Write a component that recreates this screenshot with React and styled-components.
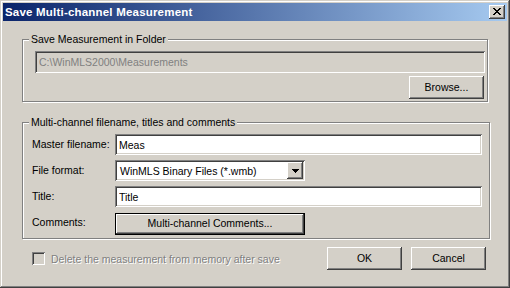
import styled, { createGlobalStyle, css } from "styled-components";

const GlobalStyle = createGlobalStyle`
  html, body {
    margin: 0;
    padding: 0;
    background: #d4d0c8;
  }
  * {
    box-sizing: border-box;
  }
`;

const face = "#d4d0c8";

const raised = css`
  box-shadow: inset -1px -1px 0 #404040, inset 1px 1px 0 #ffffff,
    inset -2px -2px 0 #808080;
`;

const sunken = css`
  box-shadow: inset 1px 1px 0 #808080, inset -1px -1px 0 #ffffff,
    inset 2px 2px 0 #404040, inset -2px -2px 0 ${face};
`;

const Window = styled.div`
  width: 510px;
  height: 288px;
  padding: 3px;
  background: ${face};
  box-shadow: inset -1px -1px 0 #404040, inset 1px 1px 0 ${face},
    inset -2px -2px 0 #808080, inset 2px 2px 0 #ffffff;
  font-family: "Liberation Sans", Arial, sans-serif;
  font-size: 10.5px;
  color: #000;
`;

const TitleBar = styled.div`
  height: 18px;
  display: flex;
  align-items: center;
  justify-content: space-between;
  padding: 0 2px 0 2px;
  background: linear-gradient(to right, #0a246a, #a6caf0);
`;

const Title = styled.span`
  color: #fff;
  font-weight: bold;
  font-size: 11.5px;
  letter-spacing: 0.2px;
  line-height: 18px;
`;

const CloseButton = styled.div`
  width: 16px;
  height: 14px;
  background: ${face};
  ${raised};
  display: flex;
  align-items: center;
  justify-content: center;
  padding: 0 1px 1px 0;
`;

const Body = styled.div`
  padding: 18px 0 0 19px;
`;

const Group = styled.div`
  position: relative;
  width: ${(p) => p.$width}px;
  margin-top: ${(p) => p.$top || 0}px;
  padding: ${(p) => p.$pad};
  border: 1px solid #808080;
  box-shadow: 1px 1px 0 #ffffff, inset 1px 1px 0 #ffffff;
`;

const Caption = styled.span`
  position: absolute;
  top: -7px;
  left: 6px;
  padding: 0 2px;
  background: ${face};
  line-height: 13px;
  white-space: nowrap;
`;

const Field = styled.input`
  display: block;
  width: ${(p) => p.$width}px;
  height: ${(p) => p.$height || 21}px;
  border: none;
  outline: none;
  margin: 0;
  padding: 0 3px 0 4px;
  font: inherit;
  color: ${(p) => (p.disabled ? "#808080" : "#000")};
  background: ${(p) => (p.disabled ? face : "#fff")};
  ${sunken};
`;

const ButtonRow = styled.div`
  display: flex;
  justify-content: flex-end;
  margin: 3px 1px 0 0;
`;

const Button = styled.button`
  width: ${(p) => p.$width || 75}px;
  height: ${(p) => p.$height || 23}px;
  margin: 0;
  padding: 0 0 1px 0;
  font: inherit;
  color: #000;
  background: ${face};
  border: ${(p) => (p.$default ? "1px solid #000" : "none")};
  ${raised};
  cursor: default;
`;

const FormGrid = styled.div`
  display: grid;
  grid-template-columns: 83px 367px;
  grid-auto-rows: 21px;
  row-gap: 5px;
  align-items: center;
`;

const Label = styled.span`
  line-height: 13px;
  white-space: nowrap;
`;

const Combo = styled.div`
  width: 190px;
  height: 21px;
  display: flex;
  align-items: center;
  justify-content: space-between;
  padding: 2px 2px 2px 5px;
  background: #fff;
  ${sunken};
`;

const DropButton = styled.div`
  width: 16px;
  height: 17px;
  background: ${face};
  ${raised};
  display: flex;
  align-items: center;
  justify-content: center;
`;

const CommentsCell = styled.div`
  grid-column: 2;
  margin-top: 2px;
  height: 22px;
`;

const Footer = styled.div`
  width: 464px;
  margin-top: 8px;
  display: flex;
  align-items: center;
  gap: 9px;
`;

const CheckLabel = styled.label`
  flex: 1;
  display: flex;
  align-items: center;
  gap: 6px;
  padding-left: 10px;
  color: #808080;
  text-shadow: 1px 1px 0 #ffffff;
  white-space: nowrap;
`;

const CheckBox = styled.span`
  width: 13px;
  height: 13px;
  background: ${face};
  ${sunken};
`;

const CloseGlyph = () => (
  <svg width="8" height="7" viewBox="0 0 8 7" shapeRendering="crispEdges">
    <path
      d="M0 0h2v1h-2zM6 0h2v1h-2zM1 1h2v1h-2zM5 1h2v1h-2zM2 2h4v1h-4zM3 3h2v1h-2zM2 4h4v1h-4zM1 5h2v1h-2zM5 5h2v1h-2zM0 6h2v1h-2zM6 6h2v1h-2z"
      fill="#000"
    />
  </svg>
);

const ArrowGlyph = () => (
  <svg width="7" height="4" viewBox="0 0 7 4" shapeRendering="crispEdges">
    <path d="M0 0h7v1h-7zM1 1h5v1h-5zM2 2h3v1h-3zM3 3h1v1h-1z" fill="#000" />
  </svg>
);

export default function App() {
  return (
    <>
      <GlobalStyle />
      <Window>
        <TitleBar>
          <Title>Save Multi-channel Measurement</Title>
          <CloseButton>
            <CloseGlyph />
          </CloseButton>
        </TitleBar>
        <Body>
          <Group $width={466} $pad="11px 2px 2px 12px">
            <Caption>Save Measurement in Folder</Caption>
            <Field
              $width={450}
              $height={22}
              disabled
              defaultValue="C:\WinMLS2000\Measurements"
            />
            <ButtonRow>
              <Button>Browse...</Button>
            </ButtonRow>
          </Group>

          <Group $width={468} $top={20} $pad="11px 7px 5px 9px">
            <Caption>Multi-channel filename, titles and comments</Caption>
            <FormGrid>
              <Label>Master filename:</Label>
              <Field $width={367} readOnly defaultValue="Meas" />
              <Label>File format:</Label>
              <Combo>
                <span>WinMLS Binary Files (*.wmb)</span>
                <DropButton>
                  <ArrowGlyph />
                </DropButton>
              </Combo>
              <Label>Title:</Label>
              <Field $width={367} readOnly defaultValue="Title" />
              <Label>Comments:</Label>
              <CommentsCell>
                <Button $default $width={190} $height={22}>
                  Multi-channel Comments...
                </Button>
              </CommentsCell>
            </FormGrid>
          </Group>

          <Footer>
            <CheckLabel>
              <CheckBox />
              Delete the measurement from memory after save
            </CheckLabel>
            <Button>OK</Button>
            <Button>Cancel</Button>
          </Footer>
        </Body>
      </Window>
    </>
  );
}
